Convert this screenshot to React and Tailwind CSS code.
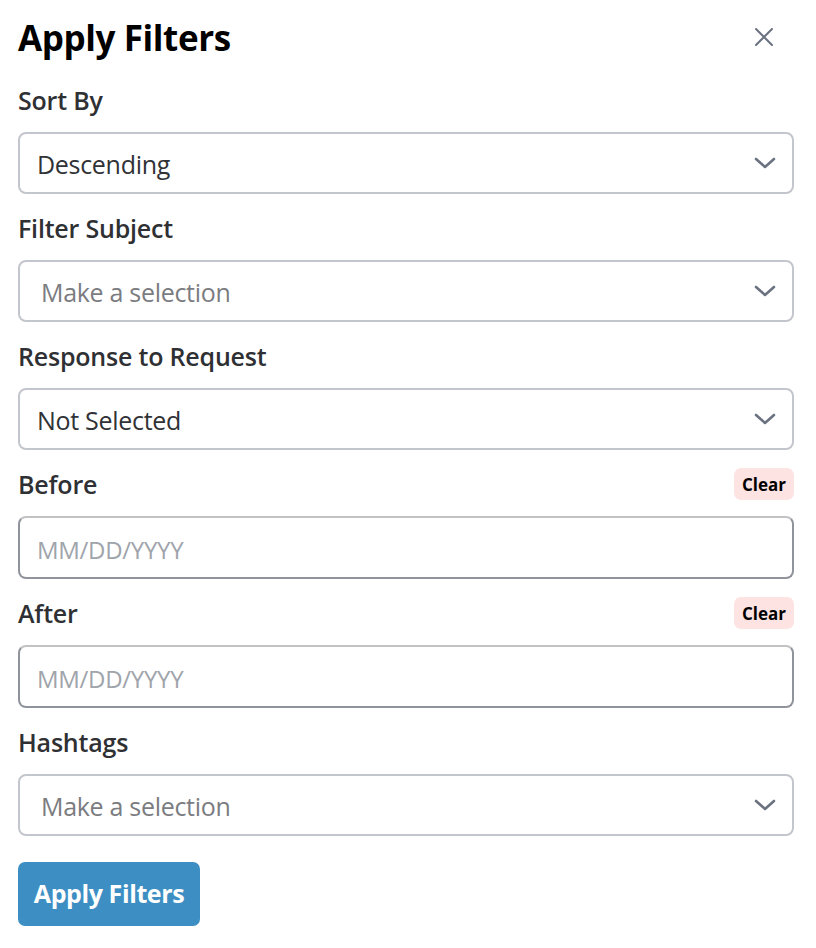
import React from 'react';

const FONT = { fontFamily: '"Open Sans", "Noto Sans", sans-serif' };

function Chevron() {
  return (
    <svg width="24" height="14" viewBox="0 0 24 14" fill="none" className="shrink-0">
      <path d="M3 3l9 8 9-8" stroke="#6b7280" strokeWidth="2.6" strokeLinecap="round" strokeLinejoin="round" />
    </svg>
  );
}

function Label({ children, clear }) {
  return (
    <div className="h-[32px] flex items-center justify-between">
      <span className="text-[25px] font-semibold text-[#2f3033] leading-none tracking-[-0.2px]">{children}</span>
      {clear && (
        <button className="h-[32px] px-[8px] rounded-[7px] bg-[#fde4e3] text-[17px] font-bold text-black leading-none">
          Clear
        </button>
      )}
    </div>
  );
}

function Select({ value, placeholder }) {
  return (
    <div className="mt-[16px] h-[62px] rounded-[8px] border-2 border-[#c3c6cc] flex items-center justify-between pr-[15px]">
      {value ? (
        <span className="pl-[17px] pt-[3px] text-[25px] text-[#303236] tracking-[-0.3px]">{value}</span>
      ) : (
        <span className="pl-[21px] pt-[3px] text-[25px] text-[#7b7c7f] tracking-[-0.3px]">{placeholder}</span>
      )}
      <Chevron />
    </div>
  );
}

function DateInput() {
  return (
    <div className="mt-[16px] h-[63px] rounded-[8px] border-2 border-[#8f939b] border-t-[#c2c2c4] flex items-center pl-[17px]">
      <span className="pt-[4px] text-[24px] text-[#a0a4ab] tracking-[-0.3px]">MM/DD/YYYY</span>
    </div>
  );
}

export default function App() {
  const groups = [
    { label: 'Sort By', el: <Select value="Descending" /> },
    { label: 'Filter Subject', el: <Select placeholder="Make a selection" /> },
    { label: 'Response to Request', el: <Select value="Not Selected" /> },
    { label: 'Before', clear: true, el: <DateInput /> },
    { label: 'After', clear: true, el: <DateInput /> },
    { label: 'Hashtags', el: <Select placeholder="Make a selection" /> },
  ];

  return (
    <div className="w-[816px] h-[948px] bg-white pl-[18px] pr-[22px] pt-[13px]" style={FONT}>
      <div className="h-[48px] flex items-center justify-between">
        <h1 className="text-[35px] font-bold text-black leading-none tracking-[-0.4px]">Apply Filters</h1>
        <svg width="20" height="20" viewBox="0 0 20 20" className="mr-[20px]">
          <path d="M2 2l16 16M18 2L2 18" stroke="#6b7280" strokeWidth="2" strokeLinecap="round" />
        </svg>
      </div>
      <div className="mt-[23px] flex flex-col gap-[18px]">
        {groups.map(g => (
          <div key={g.label}>
            <Label clear={g.clear}>{g.label}</Label>
            {g.el}
          </div>
        ))}
      </div>
      <button className="mt-[26px] h-[64px] w-[182px] rounded-[7px] bg-[#3d8fc3] text-white text-[25px] font-bold tracking-[-0.4px]">
        Apply Filters
      </button>
    </div>
  );
}
